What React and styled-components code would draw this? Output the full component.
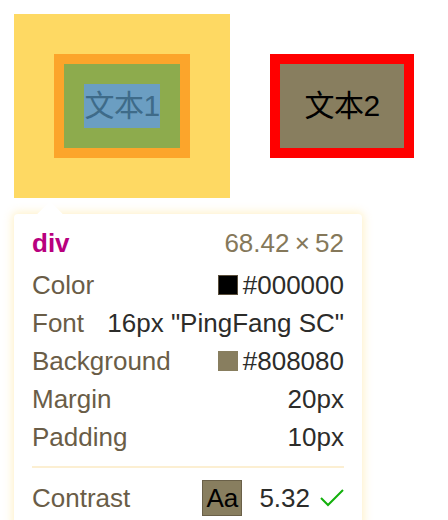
import React from 'react'
import styled, { createGlobalStyle } from 'styled-components'

const GlobalStyle = createGlobalStyle`
  html, body {
    margin: 0;
    padding: 0;
    background: #ffffff;
    overflow: hidden;
  }
  body {
    font-family: "Liberation Sans", "Noto Sans CJK SC", sans-serif;
  }
`

const Page = styled.div`
  padding: 14px;
  width: 448px;
  height: 520px;
  box-sizing: border-box;
`

const Scene = styled.div`
  display: flex;
  align-items: flex-start;
`

const MarginArea = styled.div`
  background: #fed963;
  padding: 40px;
`

const BorderBox = styled.div`
  border: 10px solid ${p => p.$border};
  background: ${p => p.$fill};
  padding: 20px;
  margin: ${p => p.$margin || 0};
`

const Content = styled.div`
  width: ${p => p.$w}px;
  height: 44px;
  line-height: 44px;
  background: ${p => p.$bg || 'transparent'};
  color: ${p => p.$color};
  font-family: "Liberation Sans", "Noto Sans CJK SC", sans-serif;
  font-size: 30px;
  white-space: nowrap;
  text-align: center;
  letter-spacing: -0.5px;
`

const Tooltip = styled.div`
  position: relative;
  margin-top: 16px;
  width: 348px;
  background: #ffffff;
  border-radius: 4px;
  padding: 10px 18px 12px;
  box-sizing: border-box;
  box-shadow: 0 0 9px 2px rgba(255, 226, 140, 0.45);

  &::before,
  &::after {
    content: '';
    position: absolute;
    top: -9px;
    left: 27px;
    width: 18px;
    height: 18px;
    background: #ffffff;
    transform: rotate(45deg);
  }
  &::before {
    z-index: -1;
    box-shadow: 0 0 9px 2px rgba(255, 226, 140, 0.45);
  }
`

const Row = styled.div`
  display: flex;
  justify-content: space-between;
  align-items: center;
  height: 38px;
  line-height: 38px;
  font-size: 26px;
  margin-bottom: ${p => p.$gap || 0}px;
`

const Tag = styled.span`
  color: #b8007e;
  font-weight: bold;
`

const Dim = styled.span`
  color: #85785a;
`

const Label = styled.span`
  color: #6a5d47;
`

const Value = styled.span`
  display: flex;
  align-items: center;
  gap: 5px;
  color: #2c2c2a;
`

const Swatch = styled.span`
  display: inline-block;
  width: 18px;
  height: 18px;
  background: ${p => p.$color};
  border: 1px solid ${p => p.$edge || p.$color};
`

const Divider = styled.div`
  height: 2px;
  background: #fcefd2;
  margin: 10px 0 11px;
`

const ContrastValue = styled.span`
  display: flex;
  align-items: center;
  color: #2c2c2a;
`

const Sample = styled.span`
  width: 38px;
  height: 34px;
  line-height: 34px;
  background: #887e5f;
  border: 1px solid #6a6048;
  color: #000000;
  text-align: center;
  margin-right: 17px;
`

const Check = () => (
  <svg width="24" height="18" viewBox="0 0 24 18" style={{ marginLeft: 10 }}>
    <polyline points="1,9 8,16 23,1" fill="none" stroke="#13b00c" strokeWidth="2" />
  </svg>
)

const rows = [
  { label: 'Color', value: '#000000', swatch: '#000000', edge: '#5a4e3b' },
  { label: 'Font', value: '16px "PingFang SC"' },
  { label: 'Background', value: '#808080', swatch: '#887e5f' },
  { label: 'Margin', value: '20px' },
  { label: 'Padding', value: '10px' },
]

export default function App() {
  return (
    <Page>
      <GlobalStyle />
      <Scene>
        <MarginArea>
          <BorderBox $border="#fca52b" $fill="#8dab4d">
            <Content $w={76} $bg="#6b9ec2" $color="#3e6b89">文本1</Content>
          </BorderBox>
        </MarginArea>
        <BorderBox $border="#ff0000" $fill="#887e5f" $margin="40px">
          <Content $w={84} $color="#000000">文本2</Content>
        </BorderBox>
      </Scene>
      <Tooltip>
        <Row $gap={4}>
          <Tag>div</Tag>
          <Dim>68.42{'\u2009'}×{'\u2009'}52</Dim>
        </Row>
        {rows.map(r => (
          <Row key={r.label}>
            <Label>{r.label}</Label>
            <Value>
              {r.swatch && <Swatch $color={r.swatch} $edge={r.edge} />}
              {r.value}
            </Value>
          </Row>
        ))}
        <Divider />
        <Row>
          <Label>Contrast</Label>
          <ContrastValue>
            <Sample>Aa</Sample>
            5.32
            <Check />
          </ContrastValue>
        </Row>
      </Tooltip>
    </Page>
  )
}
